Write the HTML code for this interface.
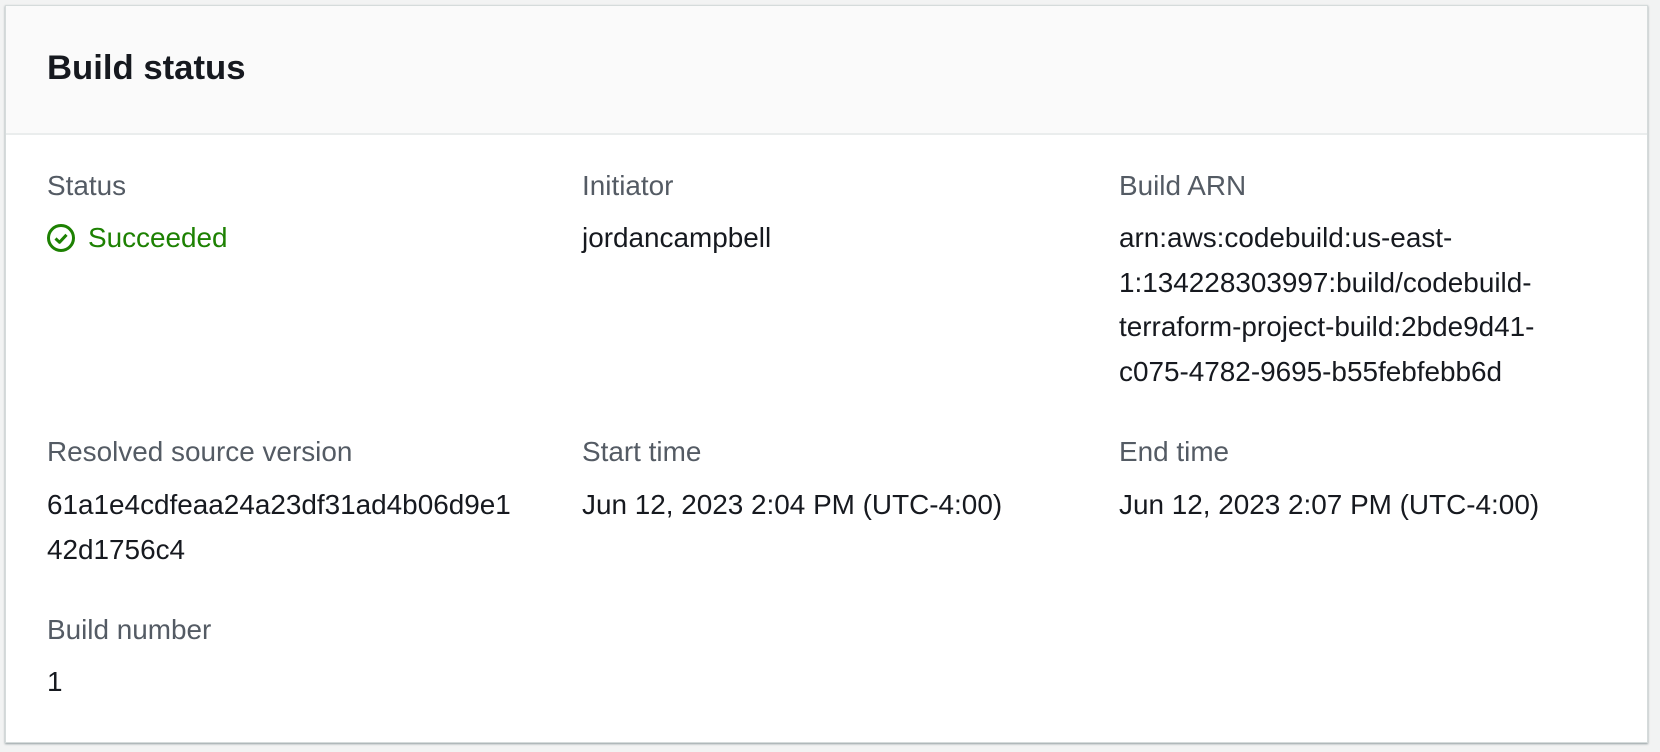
<!DOCTYPE html>
<html><head><meta charset="utf-8"><style>
html,body{margin:0;padding:0;background:#f2f3f3;width:1660px;height:752px;overflow:hidden;font-family:"Liberation Sans",sans-serif;}
.card{position:absolute;left:5px;top:5px;width:1643px;height:738px;background:#fff;border:1px solid #d5dbdb;box-shadow:0 1px 2px rgba(0,28,36,.4);box-sizing:border-box;}
.hdr{position:absolute;left:0;top:0;right:0;height:127px;background:#fafafa;border-bottom:2px solid #eaeded;}
.t{position:absolute;font-size:34.7px;font-weight:bold;color:#16191f;left:41px;top:40px;line-height:44px;}
.l,.v{position:absolute;font-size:27.9px;line-height:44.5px;white-space:nowrap;}
.l{color:#545b64;}
.v{color:#16191f;}
</style></head><body>
<div class="card">
<div class="hdr"><div class="t">Build status</div></div>
</div>
<div class="l" style="left:47px;top:164px">Status</div>
<svg style="position:absolute;left:46px;top:223px" width="30" height="30" viewBox="0 0 30 30"><circle cx="15" cy="15" r="12.5" fill="none" stroke="#1d8102" stroke-width="3"/><path d="M9.5 15.5l4 3.8 7-7.5" fill="none" stroke="#1d8102" stroke-width="3" stroke-linejoin="round"/></svg>
<div class="v" style="left:88px;top:216px;color:#1d8102">Succeeded</div>
<div class="l" style="left:582px;top:164px">Initiator</div>
<div class="v" style="left:582px;top:216px">jordancampbell</div>
<div class="l" style="left:1119px;top:164px">Build ARN</div>
<div class="v" style="left:1119px;top:216px">arn:aws:codebuild:us-east-<br>1:134228303997:build/codebuild-<br>terraform-project-build:2bde9d41-<br>c075-4782-9695-b55febfebb6d</div>
<div class="l" style="left:47px;top:430px">Resolved source version</div>
<div class="v" style="left:47px;top:483px">61a1e4cdfeaa24a23df31ad4b06d9e1<br>42d1756c4</div>
<div class="l" style="left:582px;top:430px">Start time</div>
<div class="v" style="left:582px;top:483px">Jun 12, 2023 2:04 PM (UTC-4:00)</div>
<div class="l" style="left:1119px;top:430px">End time</div>
<div class="v" style="left:1119px;top:483px">Jun 12, 2023 2:07 PM (UTC-4:00)</div>
<div class="l" style="left:47px;top:608px">Build number</div>
<div class="v" style="left:47px;top:660px">1</div>
</body></html>
